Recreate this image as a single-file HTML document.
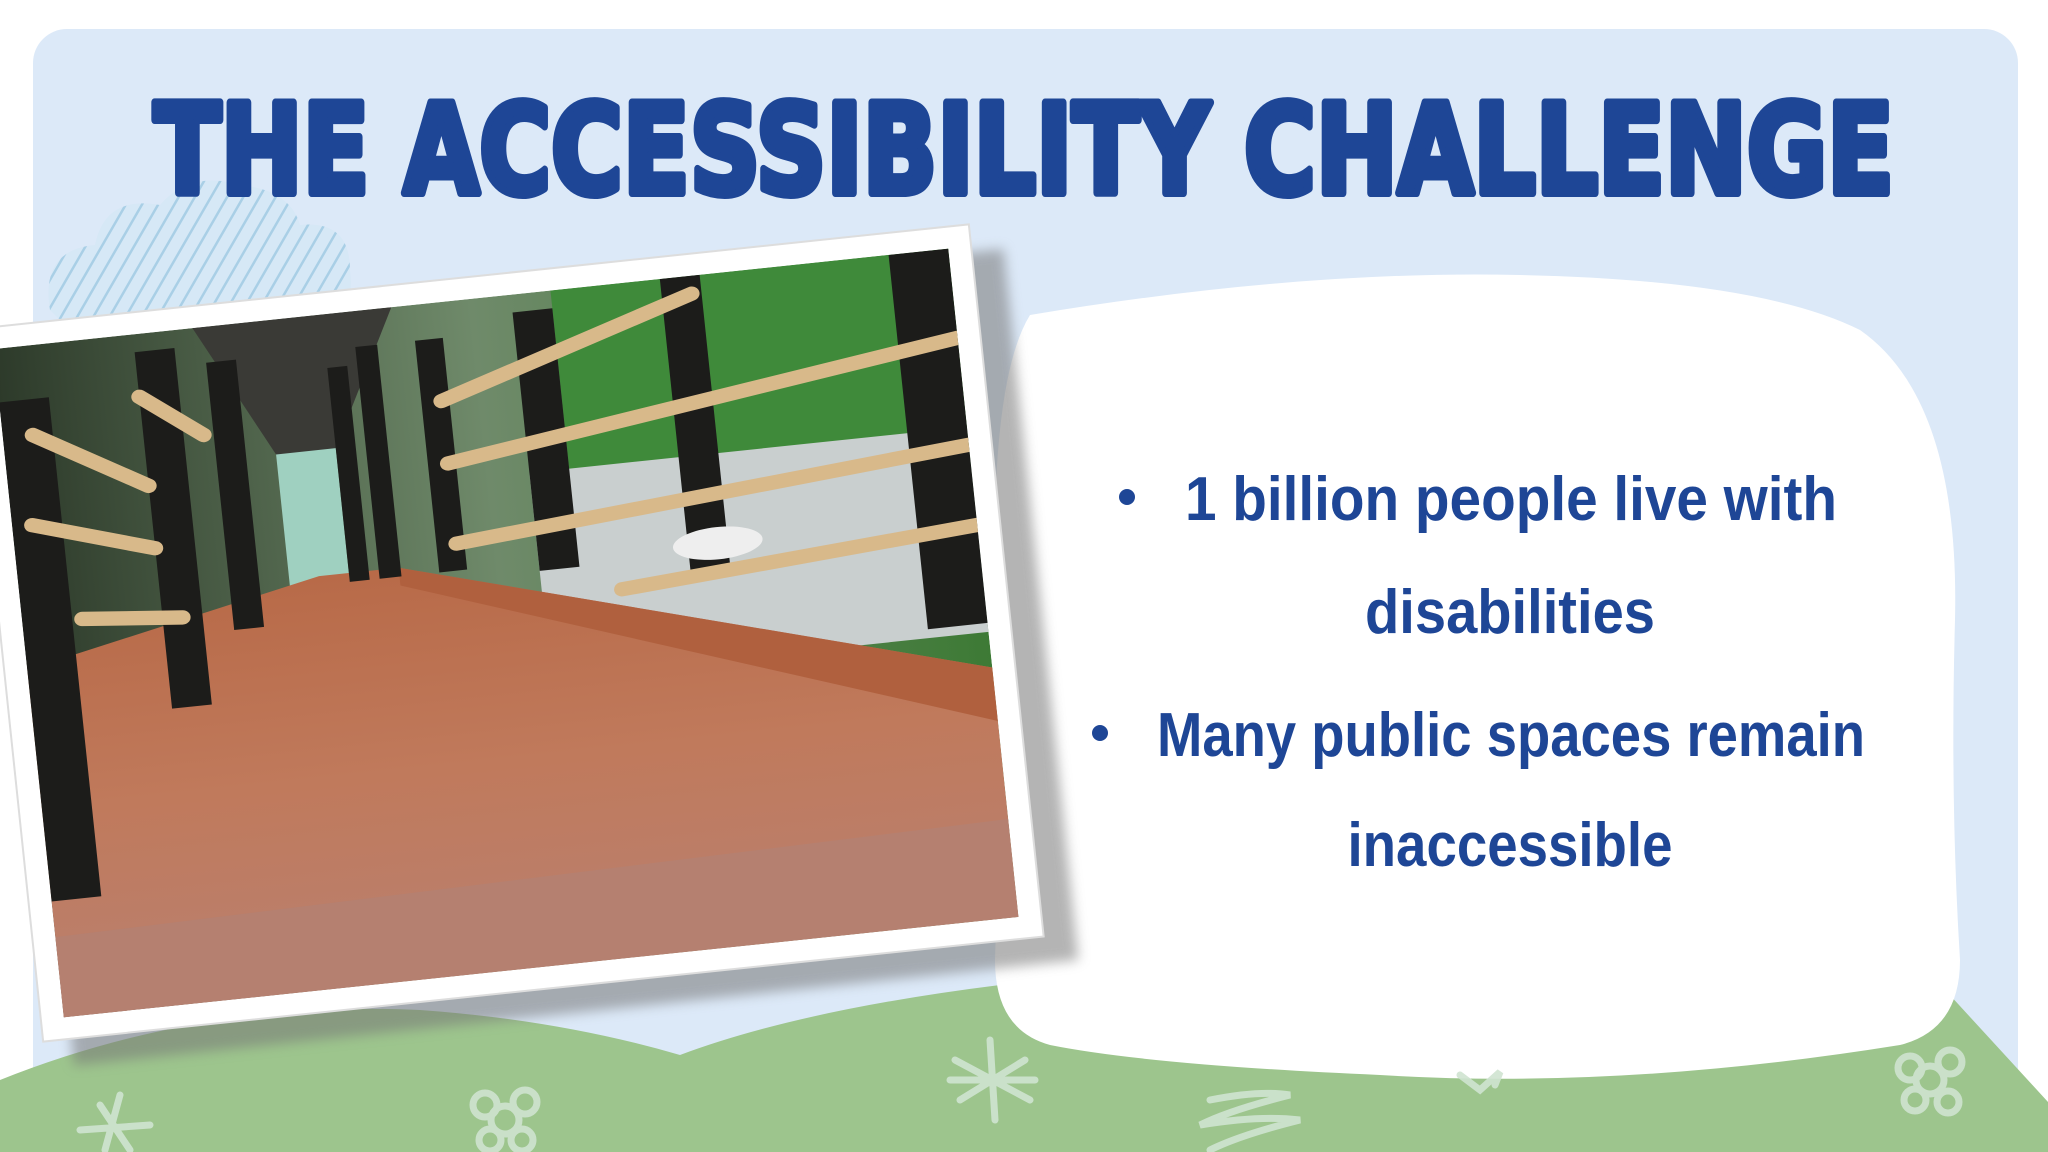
<!DOCTYPE html>
<html><head><meta charset="utf-8"><style>
html,body{margin:0;padding:0;width:2048px;height:1152px;overflow:hidden;background:#fff}
svg{display:block}
</style></head><body>
<svg width="2048" height="1152" viewBox="0 0 2048 1152" xmlns="http://www.w3.org/2000/svg">
<defs>
<pattern id="hatch" width="14" height="14" patternUnits="userSpaceOnUse" patternTransform="rotate(30)">
<rect width="14" height="14" fill="#d6e8f6"/><line x1="0" y1="0" x2="0" y2="14" stroke="#a9cfe6" stroke-width="5"/>
</pattern>
<linearGradient id="floor" x1="0" y1="0" x2="0" y2="1">
<stop offset="0" stop-color="#b86a48"/><stop offset="0.5" stop-color="#c07a5c"/><stop offset="1" stop-color="#b98070"/>
</linearGradient>
<linearGradient id="sky" x1="0" y1="0" x2="1" y2="0">
<stop offset="0" stop-color="#2d3a2a"/><stop offset="0.5" stop-color="#6f8a6a"/><stop offset="1" stop-color="#3d7a35"/>
</linearGradient>
<filter id="sh" x="-10%" y="-10%" width="130%" height="130%"><feGaussianBlur stdDeviation="6"/></filter>
</defs>
<rect x="33" y="29" width="1985" height="1160" rx="34" fill="#dce9f8"/>
<path d="M50 310 Q40 250 95 245 Q105 195 160 205 Q190 170 240 185 Q290 190 300 225 Q350 220 350 270 Q355 310 330 320 L60 320 Z" fill="url(#hatch)"/>
<path d="M0 1152 L0 1080 Q200 1000 420 1010 Q560 1020 680 1055 Q800 1010 1000 985 L1937 981 L2048 1102 L2048 1152 Z" fill="#9dc58d"/>
<path d="M1030 315 Q1300 270 1520 275 Q1760 280 1860 330 Q1960 400 1955 620 Q1950 800 1960 960 Q1960 1030 1900 1045 Q1620 1090 1380 1075 Q1150 1065 1050 1045 Q995 1030 995 960 Q1000 800 995 600 Q990 380 1030 315 Z" fill="#fff"/>
<g stroke="#cfe3d0" stroke-width="7" fill="none" stroke-linecap="round" opacity="0.9">
<path d="M100 1105 L130 1150 M80 1130 L150 1125 M120 1095 L105 1150"/>
<path d="M990 1040 L995 1120 M955 1060 L1030 1100 M960 1100 L1025 1060 M950 1080 L1035 1080"/>
<path d="M1210 1100 Q1260 1090 1290 1095 Q1230 1110 1200 1125 Q1260 1115 1300 1120 Q1240 1135 1210 1150"/>
<path d="M1460 1075 L1480 1090 L1500 1072 L1495 1085"/>
<circle cx="1930" cy="1080" r="14"/><circle cx="1910" cy="1068" r="12"/><circle cx="1950" cy="1062" r="12"/><circle cx="1915" cy="1100" r="11"/><circle cx="1948" cy="1102" r="11"/>
<circle cx="505" cy="1120" r="14"/><circle cx="485" cy="1105" r="12"/><circle cx="525" cy="1102" r="12"/><circle cx="490" cy="1140" r="11"/><circle cx="522" cy="1140" r="11"/>
</g>
<g transform="translate(506,633) rotate(-6)">
<rect x="-475" y="-330" width="1010" height="715" fill="#777" opacity="0.55" filter="url(#sh)"/>
<rect x="-503" y="-358" width="1006" height="716" fill="#fff" stroke="#ddd" stroke-width="2"/>
<svg x="-480" y="-336" width="960" height="672" viewBox="0 0 960 750" preserveAspectRatio="none">
<rect width="960" height="750" fill="url(#sky)"/>
<rect x="560" y="0" width="400" height="250" fill="#3f8a3a"/>
<rect x="520" y="200" width="440" height="230" fill="#c9cfcf"/>
<rect x="270" y="140" width="60" height="160" fill="#9fd0c0"/>
<path d="M200 0 L400 0 L330 150 L270 150 Z" fill="#3a3a36"/>
<path d="M0 360 L300 290 L380 290 L960 470 L960 750 L0 750 Z" fill="url(#floor)"/>
<path d="M380 290 L960 470 L960 530 L380 310 Z" fill="#b0603e"/>
<path d="M0 660 L960 640 L960 750 L0 750 Z" fill="#b58070"/>
<g fill="#1c1c1a">
<rect x="0" y="60" width="50" height="560"/><rect x="140" y="20" width="40" height="400"/><rect x="210" y="40" width="30" height="300"/>
<rect x="330" y="60" width="20" height="240"/><rect x="360" y="40" width="22" height="260"/><rect x="420" y="40" width="28" height="260"/>
<rect x="520" y="20" width="40" height="290"/><rect x="670" y="0" width="40" height="330"/><rect x="900" y="0" width="60" height="420"/>
</g>
<g stroke="#d8b98a" stroke-width="16" stroke-linecap="round">
<line x1="30" y1="100" x2="140" y2="170"/><line x1="20" y1="200" x2="140" y2="240"/><line x1="60" y1="310" x2="160" y2="320"/>
<line x1="140" y1="70" x2="200" y2="120"/><line x1="440" y1="180" x2="960" y2="100"/><line x1="440" y1="270" x2="960" y2="220"/>
<line x1="440" y1="110" x2="700" y2="20"/><line x1="600" y1="340" x2="960" y2="310"/>
</g>
<ellipse cx="700" cy="300" rx="45" ry="18" fill="#eee"/>
</svg>
</g>
<text x="1024" y="193" text-anchor="middle" textLength="1740" lengthAdjust="spacingAndGlyphs" font-family="'DejaVu Sans','Liberation Sans',sans-serif" font-weight="bold" font-size="124" fill="#1e4696" stroke="#1e4696" stroke-width="8" stroke-linejoin="round">THE ACCESSIBILITY CHALLENGE</text>
<g font-family="'Liberation Sans',sans-serif" font-weight="bold" font-size="62" fill="#1e4696">
<circle cx="1127" cy="497" r="8"/>
<text x="1185" y="520" textLength="652" lengthAdjust="spacingAndGlyphs">1 billion people live with</text>
<text x="1510" y="633" text-anchor="middle" textLength="290" lengthAdjust="spacingAndGlyphs">disabilities</text>
<circle cx="1100" cy="733" r="8"/>
<text x="1157" y="756" textLength="708" lengthAdjust="spacingAndGlyphs">Many public spaces remain</text>
<text x="1510" y="866" text-anchor="middle" textLength="325" lengthAdjust="spacingAndGlyphs">inaccessible</text>
</g>
</svg>
</body></html>
